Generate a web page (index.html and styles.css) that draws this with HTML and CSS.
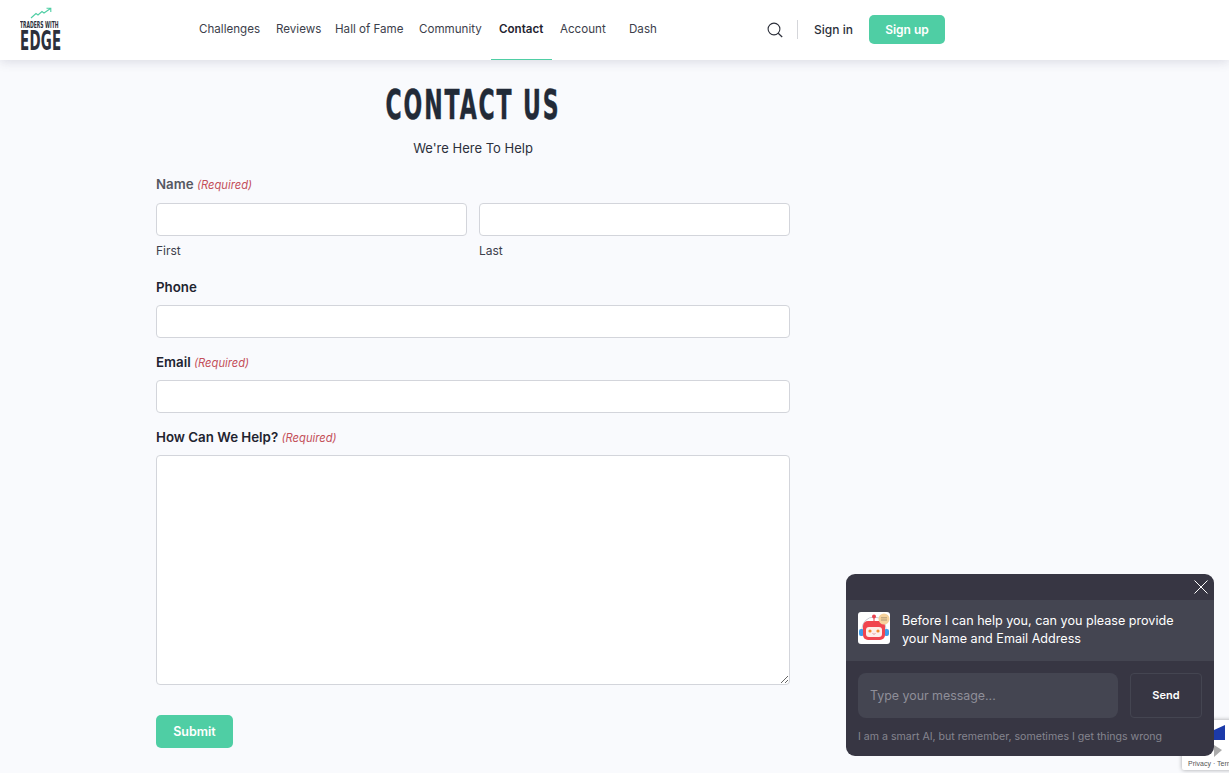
FILE: index.html
```html
<!DOCTYPE html>
<html lang="en">
<head>
<meta charset="utf-8">
<title>Contact Us</title>
<link rel="stylesheet" href="styles.css">
</head>
<body>
<header class="site-header">
  <a class="logo">
    <svg class="logo-arrow" width="22" height="12" viewBox="0 0 22 12"><path d="M1 11 L6 6.5 L8 8 L12 4.5 L14 6 L20.5 1.5 M16.5 1.2 H20.8 V5" fill="none" stroke="#4fcea4" stroke-width="1.1"/></svg>
    <span class="logo-small">TRADERS WITH</span>
    <span class="logo-big">EDGE</span>
  </a>
  <nav class="main-nav">
    <a>Challenges</a><a>Reviews</a><a>Hall of Fame</a><a>Community</a><a class="active">Contact</a><a>Account</a><a>Dash</a>
  </nav>
  <div class="header-actions">
    <svg class="search-icon" width="16" height="16" viewBox="0 0 16 16"><circle cx="7" cy="7" r="5.9" fill="none" stroke="#2c2f3a" stroke-width="1.1"/><path d="M11.2 11.2 L15.2 15" stroke="#2c2f3a" stroke-width="1.2" fill="none"/></svg>
    <span class="divider"></span>
    <a class="sign-in">Sign in</a>
    <a class="sign-up">Sign up</a>
  </div>
</header>

<main class="content">
  <h1>CONTACT US</h1>
  <p class="subtitle">We're Here To Help</p>
  <form class="contact-form">
    <div class="field name-field">
      <div class="label muted">Name <em>(Required)</em></div>
      <div class="name-row">
        <div><input type="text" class="input"><span class="sub-label">First</span></div>
        <div><input type="text" class="input"><span class="sub-label">Last</span></div>
      </div>
    </div>
    <div class="field">
      <div class="label">Phone</div>
      <input type="text" class="input">
    </div>
    <div class="field">
      <div class="label">Email <em>(Required)</em></div>
      <input type="text" class="input">
    </div>
    <div class="field">
      <div class="label">How Can We Help? <em>(Required)</em></div>
      <textarea class="textarea"></textarea>
    </div>
    <button type="button" class="submit">Submit</button>
  </form>
</main>

<div class="recaptcha">
  <svg class="recaptcha-logo" width="48" height="36" viewBox="0 0 48 36"><path d="M29 8 L40 3 V18 H29 Z" fill="#1c3aa9"/><path d="M24 16 L29 9 V18 Z" fill="#4285f4"/><path d="M29 23 L37 28 L29 35 Z" fill="#ababab"/></svg>
  <span class="recaptcha-text">Privacy · Terms</span>
</div>

<aside class="chat">
  <div class="chat-top">
    <svg width="14" height="14" viewBox="0 0 14 14"><path d="M0.5 0.5 L13.5 13.5 M13.5 0.5 L0.5 13.5" stroke="#fff" stroke-width="1"/></svg>
  </div>
  <div class="chat-message">
    <svg class="bot" width="32" height="32" viewBox="0 0 32 32">
      <rect width="32" height="32" rx="3" fill="#fff"/>
      <path d="M4 17 A12 12 0 0 1 28 17" fill="none" stroke="#c9ccd6" stroke-width="1"/>
      <path d="M16 4 V9" stroke="#e8434f" stroke-width="1"/>
      <circle cx="16" cy="4.5" r="2" fill="#e8434f"/>
      <rect x="1" y="17" width="5" height="7" rx="2" fill="#3f9be8"/>
      <rect x="26" y="17" width="5" height="7" rx="2" fill="#3f9be8"/>
      <rect x="5" y="9" width="22" height="19" rx="5" fill="#f0454f"/>
      <rect x="8" y="15" width="16" height="10" rx="3" fill="#fdeeea"/>
      <circle cx="12" cy="19" r="1.6" fill="#f58a2c"/>
      <circle cx="20" cy="19" r="1.6" fill="#f58a2c"/>
      <path d="M14.5 21.5 Q16 23 17.5 21.5" fill="none" stroke="#d9808a" stroke-width="0.8"/>
      <circle cx="26" cy="7" r="5.5" fill="#f6d29c"/>
      <path d="M23 5.8 H29 M23 8 H29" stroke="#9c8a70" stroke-width="0.8"/>
    </svg>
    <p>Before I can help you, can you please provide your Name and Email Address</p>
  </div>
  <div class="chat-form">
    <div class="chat-input">Type your message...</div>
    <div class="chat-send">Send</div>
  </div>
  <p class="chat-note">I am a smart AI, but remember, sometimes I get things wrong</p>
</aside>
</body>
</html>
```

FILE: styles.css
```css
* { box-sizing: border-box; }
html, body { margin: 0; height: 773px; overflow: hidden; }
body {
  background: #f9fafd;
  color: #1f2430;
  font-family: Inter, "Noto Sans", sans-serif;
  position: relative;
}

.site-header {
  height: 60px;
  background: #fff;
  box-shadow: 0 2px 10px rgba(60, 65, 100, 0.16);
  display: flex;
  padding-left: 20px;
  position: relative;
}
.logo {
  width: 171px;
  display: flex;
  flex-direction: column;
  font-family: "DejaVu Sans", sans-serif;
  font-weight: 700;
  color: #2c303b;
  padding-top: 7px;
}
.logo-arrow { margin-left: 10px; display: block; }
.logo-small {
  font-size: 9px;
  line-height: 9px;
  margin-top: 2px;
  transform: scaleX(.5);
  transform-origin: 0 0;
  white-space: nowrap;
}
.logo-big {
  font-size: 27px;
  line-height: 21px;
  transform: scaleX(.495);
  transform-origin: 0 0;
  letter-spacing: 0.5px;
}

.main-nav {
  display: grid;
  grid-template-columns: 77px 59px 84px 80px 61px 69px 70px;
  height: 60px;
}
.main-nav a {
  padding: 0 0 0 8px;
  font-size: 11.6px;
  line-height: 58px;
  color: #3c404b;
  white-space: nowrap;
}
.main-nav a.active {
  color: #1f2430;
  font-weight: 600;
  border-bottom: 1px solid #4fcea4;
}

.header-actions {
  display: flex;
  align-items: center;
  margin-left: 76px;
  height: 59px;
}
.search-icon { display: block; margin-top: 1px; }
.divider { width: 1px; height: 19px; background: #d5d6da; margin-left: 14px; }
.sign-in { font-size: 12px; font-weight: 500; color: #2c303b; margin-left: 16px; width: 55px; white-space: nowrap; }
.sign-up {
  width: 76px;
  height: 29px;
  background: #4fcea4;
  color: #fff;
  font-size: 12px;
  font-weight: 600;
  line-height: 29px;
  text-align: center;
  border-radius: 5px;
}

.content { width: 634px; margin-left: 156px; }
h1 {
  margin: 0;
  padding-top: 25px;
  font-family: "DejaVu Sans", sans-serif;
  font-size: 40px;
  line-height: 40px;
  font-weight: 700;
  letter-spacing: 3.4px;
  text-align: center;
  color: #222a37;
  transform: scaleX(.55);
  white-space: nowrap;
  -webkit-text-stroke: 0.5px #222a37;
}
.subtitle {
  margin: 0;
  padding-top: 15px;
  font-size: 13px;
  line-height: 17px;
  text-align: center;
  color: #2c303b;
}
.contact-form { padding-top: 19px; }
.field { display: flex; flex-direction: column; margin-bottom: 15px; }
.name-field { margin-bottom: 19px; }
.label {
  font-size: 13.3px;
  line-height: 18px;
  height: 18px;
  font-weight: 600;
  color: #1f2430;
  margin-bottom: 9px;
}
.label.muted { color: #555862; line-height: 16px; }
.label em { font-size: 11.2px; line-height: 1; font-weight: 400; color: #c4505a; }
.input {
  display: block;
  width: 100%;
  height: 33px;
  background: #fff;
  border: 1px solid #d3d5db;
  border-radius: 4px;
  padding: 0;
  margin: 0;
}
.textarea {
  display: block;
  width: 100%;
  height: 230px;
  background: #fff;
  border: 1px solid #d3d5db;
  border-radius: 4px;
  padding: 0;
  margin: 0;
}
.name-row { display: grid; grid-template-columns: 311px 311px; gap: 12px; }
.sub-label { display: block; font-size: 12px; line-height: 16px; margin-top: 7px; color: #3c404b; }
.submit {
  display: block;
  width: 77px;
  height: 33px;
  margin-top: 30px;
  border: 0;
  border-radius: 5px;
  background: #4fcea4;
  color: #fff;
  font-family: inherit;
  font-size: 12.5px;
  font-weight: 600;
}

.recaptcha {
  position: absolute;
  left: 1182px;
  top: 720px;
  width: 70px;
  height: 50px;
  background: #fff;
  box-shadow: 0 0 4px rgba(0, 0, 0, 0.35);
  border-radius: 2px;
}
.recaptcha-logo { position: absolute; left: 3px; top: 2px; }
.recaptcha-text {
  position: absolute;
  left: 6px;
  top: 39px;
  font-family: "Liberation Sans", sans-serif;
  font-size: 7px;
  line-height: 10px;
  color: #555;
  white-space: nowrap;
}

.chat {
  position: absolute;
  left: 846px;
  top: 574px;
  width: 368px;
  height: 182px;
  background: #373643;
  border-radius: 9px;
  color: #fff;
}
.chat-top { height: 26px; display: flex; justify-content: flex-end; padding: 6px 6px 0 0; }
.chat-top svg { display: block; }
.chat-message {
  height: 61px;
  background: #444551;
  display: flex;
  align-items: center;
  padding: 0 12px 1px;
  gap: 12px;
}
.bot { flex: none; display: block; align-self: flex-start; margin-top: 12px; }
.chat-message p { margin: 0; font-size: 12.6px; line-height: 18px; width: 285px; }
.chat-form { display: flex; gap: 12px; padding: 12px 12px 0; }
.chat-input {
  width: 260px;
  height: 45px;
  background: #444551;
  border-radius: 8px;
  padding-left: 12px;
  font-size: 12.4px;
  line-height: 45px;
  color: #8f8f99;
}
.chat-send {
  width: 72px;
  height: 45px;
  border: 1px solid #444551;
  border-radius: 4px;
  font-size: 11px;
  font-weight: 600;
  line-height: 43px;
  text-align: center;
}
.chat-note {
  margin: 0;
  padding: 12px 12px 0;
  font-size: 10.6px;
  line-height: 14px;
  color: #85858f;
}
```
